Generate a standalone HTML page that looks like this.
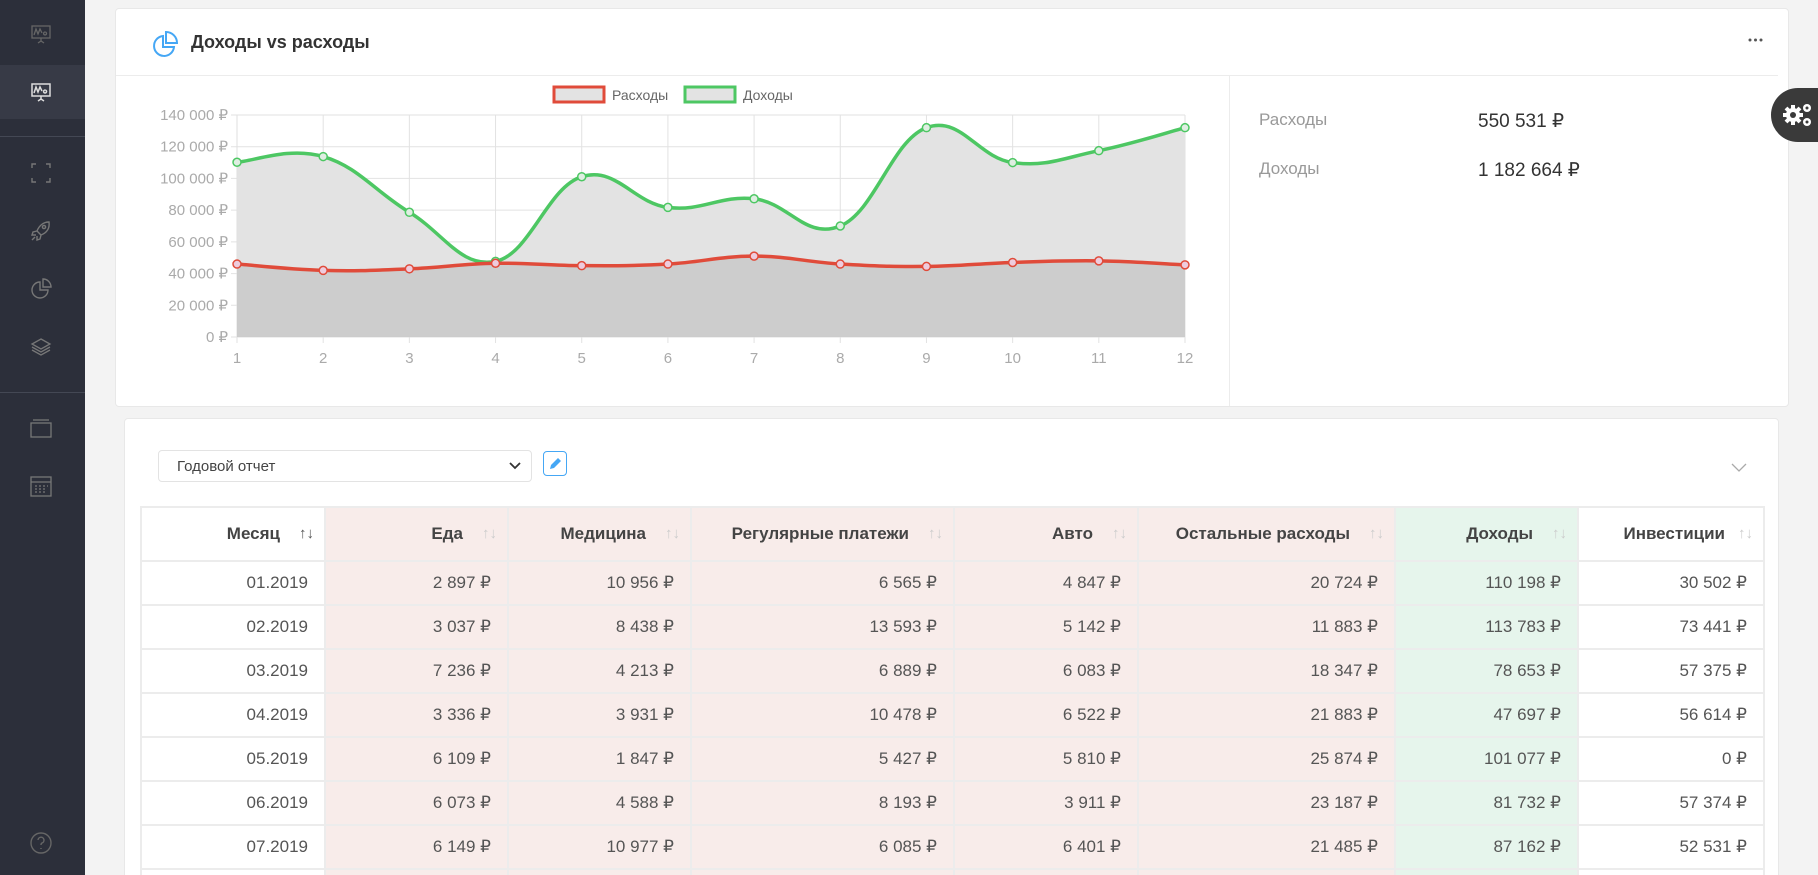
<!DOCTYPE html><html><head><meta charset="utf-8"><style>
*{box-sizing:border-box;margin:0;padding:0}
html,body{width:1818px;height:875px;overflow:hidden}
body{background:#f3f3f3;font-family:"Liberation Sans",sans-serif;position:relative;color:#444}
.sb{position:absolute;left:0;top:0;width:85px;height:875px;background:#2c2f3a;z-index:2}
.sb .act{position:absolute;left:0;top:65px;width:85px;height:54px;background:#373a46}
.sb .div{position:absolute;left:0;width:85px;height:1px;background:#444854}
.ic{position:absolute;left:29px;width:24px;height:24px}
.card{position:absolute;background:#fff;border:1px solid #e8e8e8;border-radius:4px}
.t{position:absolute;white-space:nowrap}
table{border-collapse:collapse;position:absolute;left:140px;top:506px;font-size:17px}
td,th{border:2px solid #ececec;height:44px;text-align:right;padding-right:16px;color:#555;font-weight:normal}
th{height:54px;font-weight:bold;color:#444;position:relative;padding-right:44px}
th span{position:absolute;right:10px;top:17px;color:#ccc;font-weight:normal;font-size:15px}
.p{background:#f8ecea}.g{background:#e6f5ec}
</style></head><body>
<div class="sb">
<div class="act"></div>
<div class="div" style="top:136px"></div><div class="div" style="top:392px"></div>
<svg class="ic" style="top:22px" viewBox="0 0 24 24" fill="none" stroke="#666" stroke-width="1.3"><rect x="3" y="4" width="18" height="12"/><path d="M5 13l2-6 2 5 2-5 2 4M16 10a1.5 1.5 0 1 0 .1 0M12 16v3M9 21l3-2 3 2"/></svg>
<svg class="ic" style="top:80px" viewBox="0 0 24 24" fill="none" stroke="#ddd" stroke-width="1.5"><rect x="3" y="4" width="18" height="12"/><path d="M5 13l2-6 2 5 2-5 2 4M16 10a1.5 1.5 0 1 0 .1 0M12 16v3M9 21l3-2 3 2"/></svg>
<svg class="ic" style="top:161px" viewBox="0 0 24 24" fill="none" stroke="#777" stroke-width="1.4"><path d="M3 7V3h4M17 3h4v4M21 17v4h-4M7 21H3v-4"/></svg>
<svg class="ic" style="top:219px" viewBox="0 0 24 24" fill="none" stroke="#777" stroke-width="1.4"><path d="M20 3c-6 0-10 4-12 9l4 4c5-2 9-6 8-13zM8 12l-4 1-1 3 4 0M12 16l-1 4-3 1 0-4M6 18l-3 3"/><circle cx="15" cy="8" r="1.6"/></svg>
<svg class="ic" style="top:277px" viewBox="0 0 24 24" fill="none" stroke="#777" stroke-width="1.4"><path d="M11 5a8 8 0 1 0 8 8h-8z"/><path d="M14 2v8h8a8 8 0 0 0-8-8z"/></svg>
<svg class="ic" style="top:335px" viewBox="0 0 24 24" fill="none" stroke="#777" stroke-width="1.3"><path d="M12 4l9 5-9 5-9-5zM3 12l9 5 9-5M3 15l9 5 9-5"/></svg>
<svg class="ic" style="top:416px" viewBox="0 0 24 24" fill="none" stroke="#777" stroke-width="1.3"><rect x="2" y="7" width="20" height="14"/><path d="M4 4h16"/></svg>
<svg class="ic" style="top:474px" viewBox="0 0 24 24" fill="none" stroke="#777" stroke-width="1.3"><rect x="2" y="3" width="20" height="19"/><path d="M2 8h20M6 12h2M10 12h2M14 12h2M18 12h1M6 15h2M10 15h2M14 15h2M6 18h2M10 18h2M14 18h2"/></svg>
<svg class="ic" style="top:831px" viewBox="0 0 24 24" fill="none" stroke="#666" stroke-width="1.4"><circle cx="12" cy="12" r="10"/><path d="M9 9a3 3 0 1 1 4 3c-1 .5-1 1-1 2M12 17v1"/></svg>
</div>

<div class="card" style="left:115px;top:8px;width:1674px;height:399px">
<div style="position:absolute;left:0;right:10px;top:66px;height:1px;background:#ececec"></div>
<div style="position:absolute;left:1113px;top:67px;width:1px;bottom:0;background:#ececec"></div>
<svg style="position:absolute;left:35px;top:20px" width="30" height="30" viewBox="0 0 30 30" fill="none" stroke="#45a7f5" stroke-width="2"><path d="M12 7a10 10 0 1 0 11 11H12z"/><path d="M15 3v11h11a11 11 0 0 0-11-11z"/></svg>
<div class="t" style="left:75px;top:23px;font-size:18px;font-weight:bold;color:#333">Доходы vs расходы</div>
<svg style="position:absolute;left:1632px;top:28px" width="16" height="6"><circle cx="2" cy="3" r="1.5" fill="#555"/><circle cx="7.5" cy="3" r="1.5" fill="#555"/><circle cx="13" cy="3" r="1.5" fill="#555"/></svg>
<div class="t" style="left:1143px;top:101px;font-size:17px;color:#999">Расходы</div>
<div class="t" style="left:1362px;top:101px;font-size:19px;color:#333">550 531 ₽</div>
<div class="t" style="left:1143px;top:150px;font-size:17px;color:#999">Доходы</div>
<div class="t" style="left:1362px;top:150px;font-size:19px;color:#333">1 182 664 ₽</div>
</div>

<svg style="position:absolute;left:0;top:0" width="1818" height="420" id="ch">
<g font-family="Liberation Sans" font-size="14" fill="#999">
<rect x="554" y="87" width="50" height="15" fill="#e3e3e3" stroke="#e04b3a" stroke-width="3"/>
<text x="612" y="100" fill="#666">Расходы</text>
<rect x="685" y="87" width="50" height="15" fill="#e3e3e3" stroke="#4dc763" stroke-width="3"/>
<text x="743" y="100" fill="#666">Доходы</text>
</g>
<g id="grid" stroke="#e2e2e2" stroke-width="1"></g>
<path id="ga" fill="#e3e3e3"/><path id="ra" fill="#cdcdcd"/>
<g id="vg" stroke="#000" stroke-opacity=".08"></g>
<path id="gl" fill="none" stroke="#4dc763" stroke-width="3.5"/>
<path id="rl" fill="none" stroke="#e04b3a" stroke-width="3.5"/>
<g id="pts"></g>
<g id="lbl" font-family="Liberation Sans" font-size="15" fill="#aaa"></g>
</svg>

<div style="position:absolute;left:1771px;top:88px;width:47px;height:54px;background:#3a3a3a;border-radius:27px 0 0 27px"></div>
<svg style="position:absolute;left:1782px;top:102px" width="32" height="26" viewBox="0 0 32 26"><g fill="#fff"><circle cx="11" cy="13" r="7"/><g stroke="#fff" stroke-width="4"><path d="M11 3v20M1 13h20M4 6l14 14M18 6L4 20"/></g><circle cx="11" cy="13" r="3" fill="#3a3a3a"/><circle cx="25" cy="6" r="4"/><circle cx="25" cy="20" r="4"/><circle cx="25" cy="6" r="1.5" fill="#3a3a3a"/><circle cx="25" cy="20" r="1.5" fill="#3a3a3a"/></g></svg>

<div class="card" style="left:124px;top:418px;width:1655px;height:470px">
<div style="position:absolute;left:33px;top:31px;width:374px;height:32px;border:1px solid #e3e3e3;border-radius:4px;font-size:15px;color:#444;padding:7px 0 0 18px">Годовой отчет<svg style="position:absolute;right:10px;top:11px" width="12" height="8"><path d="M1 1l5 5 5-5" fill="none" stroke="#333" stroke-width="1.8"/></svg></div>
<div style="position:absolute;left:418px;top:32px;width:24px;height:25px;border:1px solid #45a7f5;border-radius:4px"><svg width="22" height="23" viewBox="0 0 22 23"><path d="M6 17l1-4 7-7 3 3-7 7z" fill="#45a7f5"/></svg></div>
<svg style="position:absolute;left:1606px;top:44px" width="16" height="10"><path d="M1 1l7 7 7-7" fill="none" stroke="#aaa" stroke-width="1.3"/></svg>
</div>

<table>
<tr><th style="width:184px;background:#fff">Месяц<span style="color:#555">↑↓</span></th><th class="p" style="width:183px">Еда<span>↑↓</span></th><th class="p" style="width:183px">Медицина<span>↑↓</span></th><th class="p" style="width:263px">Регулярные платежи<span>↑↓</span></th><th class="p" style="width:184px">Авто<span>↑↓</span></th><th class="p" style="width:257px">Остальные расходы<span>↑↓</span></th><th class="g" style="width:183px">Доходы<span>↑↓</span></th><th style="width:186px;background:#fff;padding-right:38px">Инвестиции<span>↑↓</span></th></tr>
<tr><td>01.2019</td><td class="p">2 897 ₽</td><td class="p">10 956 ₽</td><td class="p">6 565 ₽</td><td class="p">4 847 ₽</td><td class="p">20 724 ₽</td><td class="g">110 198 ₽</td><td>30 502 ₽</td></tr>
<tr><td>02.2019</td><td class="p">3 037 ₽</td><td class="p">8 438 ₽</td><td class="p">13 593 ₽</td><td class="p">5 142 ₽</td><td class="p">11 883 ₽</td><td class="g">113 783 ₽</td><td>73 441 ₽</td></tr>
<tr><td>03.2019</td><td class="p">7 236 ₽</td><td class="p">4 213 ₽</td><td class="p">6 889 ₽</td><td class="p">6 083 ₽</td><td class="p">18 347 ₽</td><td class="g">78 653 ₽</td><td>57 375 ₽</td></tr>
<tr><td>04.2019</td><td class="p">3 336 ₽</td><td class="p">3 931 ₽</td><td class="p">10 478 ₽</td><td class="p">6 522 ₽</td><td class="p">21 883 ₽</td><td class="g">47 697 ₽</td><td>56 614 ₽</td></tr>
<tr><td>05.2019</td><td class="p">6 109 ₽</td><td class="p">1 847 ₽</td><td class="p">5 427 ₽</td><td class="p">5 810 ₽</td><td class="p">25 874 ₽</td><td class="g">101 077 ₽</td><td>0 ₽</td></tr>
<tr><td>06.2019</td><td class="p">6 073 ₽</td><td class="p">4 588 ₽</td><td class="p">8 193 ₽</td><td class="p">3 911 ₽</td><td class="p">23 187 ₽</td><td class="g">81 732 ₽</td><td>57 374 ₽</td></tr>
<tr><td>07.2019</td><td class="p">6 149 ₽</td><td class="p">10 977 ₽</td><td class="p">6 085 ₽</td><td class="p">6 401 ₽</td><td class="p">21 485 ₽</td><td class="g">87 162 ₽</td><td>52 531 ₽</td></tr>
<tr><td></td><td class="p"></td><td class="p"></td><td class="p"></td><td class="p"></td><td class="p"></td><td class="g"></td><td></td></tr>
</table>

<script>
var G=[110198,113783,78653,47697,101077,81732,87162,70000,132000,110000,117500,132000];
var R=[46000,42000,43000,46500,45000,46000,51000,46000,44500,47000,48000,45500];
var x0=237,x1=1185,y0=337,y1=115,dx=(x1-x0)/11;
function X(i){return x0+i*dx}function Y(v){return y0-v/140000*(y0-y1)}
function path(a){var p=a.map(function(v,i){return[X(i),Y(v)]});var d="M"+p[0][0]+" "+p[0][1];
for(var i=0;i<p.length-1;i++){var a0=p[i-1]||p[i],b=p[i],c=p[i+1],e=p[i+2]||c,t=.4/2;
d+=" C"+(b[0]+(c[0]-a0[0])*t)+" "+(b[1]+(c[1]-a0[1])*t)+" "+(c[0]-(e[0]-b[0])*t)+" "+(c[1]-(e[1]-b[1])*t)+" "+c[0]+" "+c[1];}return d}
var ns="http://www.w3.org/2000/svg";function el(n,at,par){var e=document.createElementNS(ns,n);for(var k in at)e.setAttribute(k,at[k]);document.getElementById(par).appendChild(e);return e}
for(var v=0;v<=140000;v+=20000){el("line",{x1:x0-6,x2:x1,y1:Y(v),y2:Y(v)},"grid");var t=el("text",{x:x0-9,y:Y(v)+5,"text-anchor":"end"},"lbl");t.textContent=(v?(v/1000)+" 000":"0")+" ₽";}
for(var i=0;i<12;i++){el("line",{x1:X(i),x2:X(i),y1:y1,y2:y0+6},"grid");var t=el("text",{x:X(i),y:363,"text-anchor":"middle"},"lbl");t.textContent=i+1;}
el("line",{x1:x0,x2:x0,y1:y1,y2:y0,stroke:"#bbb"},"vg");el("line",{x1:x0,x2:x1,y1:y0,y2:y0,stroke:"#bbb"},"vg");
var gp=path(G),rp=path(R);
document.getElementById("ga").setAttribute("d",gp+" L"+x1+" "+y0+" L"+x0+" "+y0+"Z");
document.getElementById("ra").setAttribute("d",rp+" L"+x1+" "+y0+" L"+x0+" "+y0+"Z");
document.getElementById("gl").setAttribute("d",gp);document.getElementById("rl").setAttribute("d",rp);
for(var i=0;i<12;i++){el("circle",{cx:X(i),cy:Y(G[i]),r:4,fill:"#dfeee2",stroke:"#4dc763","stroke-width":1.5},"pts");el("circle",{cx:X(i),cy:Y(R[i]),r:4,fill:"#ecd",stroke:"#e04b3a","stroke-width":1.5},"pts");}
</script>
</body></html>
